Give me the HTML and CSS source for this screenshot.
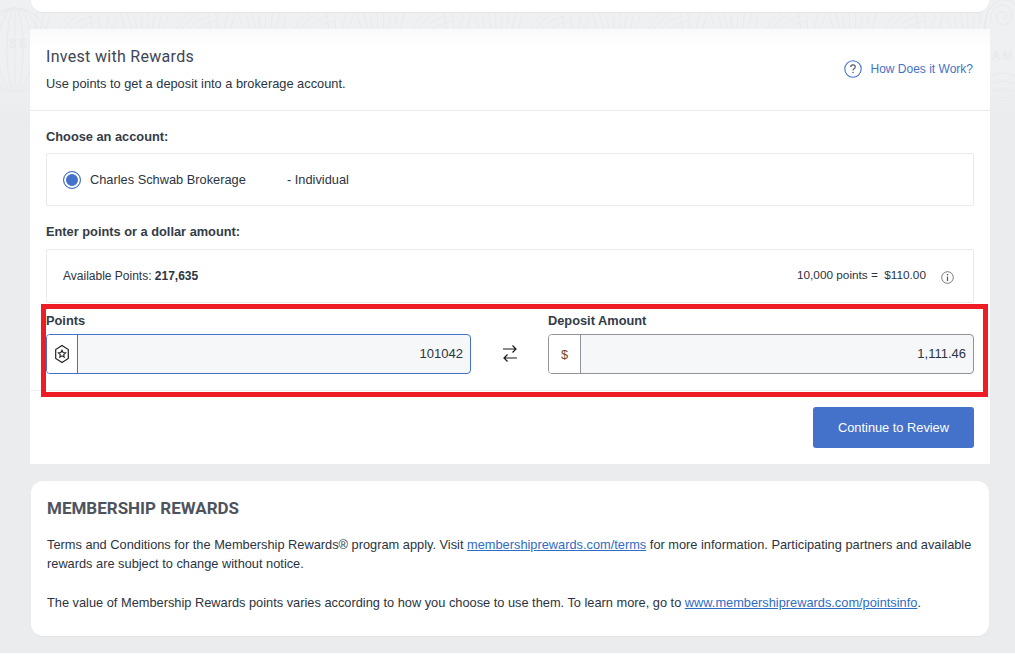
FILE: index.html
```html
<!DOCTYPE html>
<html lang="en">
<head>
<meta charset="utf-8">
<title>Invest with Rewards</title>
<link rel="stylesheet" href="styles.css">
</head>
<body>
<div class="page">
  <svg class="pattern" width="1015" height="125" viewBox="0 0 1015 125" aria-hidden="true">
    <defs>
      <pattern id="hatch" width="118" height="18" patternUnits="userSpaceOnUse" y="12">
        <path d="M2 0L8 18M9 0L14 18M16 0L19 18M23 0L24 18M30 0L29 18M37 0L34 18M44 0L40 18M51 0L46 18M58 18C62 10 68 3 76 0M64 18C68 11 74 5 84 0M70 18C74 12 80 8 92 4M78 18C82 14 88 11 98 9M90 0L93 18M98 0L100 18M106 18L110 0M112 18L118 0" fill="none" stroke="#e9eaec" stroke-width="1"/>
      </pattern>
    </defs>
    <rect width="1015" height="125" fill="#eff0f1"/>
    <rect x="30" y="12" width="960" height="18" fill="url(#hatch)"/>
    <g fill="none" stroke="#e8e9eb" stroke-width="1">
      <ellipse cx="15" cy="50" rx="36" ry="42"/>
      <ellipse cx="15" cy="50" rx="26" ry="42"/>
      <ellipse cx="15" cy="50" rx="17" ry="42"/>
      <ellipse cx="15" cy="50" rx="8" ry="42"/>
      <path d="M15 8V92"/>
      <path d="M991 22C989 12 995 4 1003 5C1011 6 1014 14 1011 20C1008 26 999 26 997 20C995 14 1000 10 1004 12C1008 14 1007 19 1003 19"/>
      <path d="M985 33C983 14 992 -1 1006 0C1012 1 1015 4 1015 6"/>
      <path d="M990 76C1000 72 1010 73 1015 76M990 84C1000 80 1010 81 1015 84M990 92C1000 88 1010 89 1015 92M990 100C1000 96 1010 97 1015 100"/>
    </g>
    <text class="pattern-text" x="9" y="48">SER</text>
    <text class="pattern-text" x="992" y="60">AM</text>
  </svg>
  <div class="top-card"></div>
  <main class="panel">
    <header class="panel-head">
      <div>
        <h1 class="title">Invest with Rewards</h1>
        <p class="subtitle">Use points to get a deposit into a brokerage account.</p>
      </div>
      <a class="how" href="#">
        <svg class="how-icon" width="18" height="18" viewBox="0 0 18 18"><circle cx="9" cy="9" r="8.2" fill="none" stroke="#4471c9" stroke-width="1.1"/><path d="M6.700 7.100C6.700 5.700 7.700 4.900 9 4.900S11.300 5.700 11.300 6.900C11.300 8.400 9 8.600 9 10.400" fill="none" stroke="#4a5568" stroke-width="1.1"/><circle cx="9" cy="12.600" r=".75" fill="#4a5568"/></svg>
        <span>How Does it Work?</span>
      </a>
    </header>
    <section class="body">
      <h2 class="label">Choose an account:</h2>
      <div class="box account">
        <span class="radio"></span>
        <span class="acct-name">Charles Schwab Brokerage</span>
        <span>- Individual</span>
      </div>
      <h2 class="label second">Enter points or a dollar amount:</h2>
      <div class="box info">
        <span>Available Points: <b>217,635</b></span>
        <div class="rate">
          <span class="rate-text">10,000 points = <span class="rate-value">$110.00</span></span>
          <svg class="info-icon" width="13" height="13" viewBox="0 0 13 13"><circle cx="6.5" cy="6.5" r="5.8" fill="none" stroke="#777" stroke-width="1"/><path d="M6.500 5.600V10" stroke="#555" stroke-width="1.200"/><circle cx="6.500" cy="3.700" r=".8" fill="#555"/></svg>
        </div>
      </div>
      <div class="fields">
        <div class="field">
          <label class="field-label">Points</label>
          <div class="input active">
            <span class="addon">
              <svg width="18" height="20" viewBox="0 0 18 20"><path d="M9 1.400L15.300 5.500V14.500L9 18.600L2.700 14.500V5.500Z" fill="none" stroke="#222" stroke-width="1.2"/><path d="M9 6.200L10.100 8.600L12.600 8.900L10.700 10.600L11.200 13.100L9 11.800L6.800 13.100L7.300 10.600L5.400 8.900L7.900 8.600Z" fill="none" stroke="#222" stroke-width="1.1"/></svg>
            </span>
            <span class="value">101042</span>
          </div>
        </div>
        <div class="swap">
          <svg width="16" height="18" viewBox="0 0 16 18"><path d="M1 5H14M10.500 1.500L14 5L10.500 8.500M15 14H2M5.500 10.500L2 14L5.500 17.500" fill="none" stroke="#1a1a1a" stroke-width="1.2"/></svg>
        </div>
        <div class="field">
          <label class="field-label">Deposit Amount</label>
          <div class="input deposit">
            <span class="addon">$</span>
            <span class="value">1,111.46</span>
          </div>
        </div>
      </div>
      <div class="actions"><button class="cta" type="button">Continue to Review</button></div>
    </section>
    <div class="highlight"></div>
  </main>
  <section class="legal">
    <h2 class="legal-title">MEMBERSHIP REWARDS</h2>
    <p class="legal-text">Terms and Conditions for the Membership Rewards® program apply. Visit <a href="#">membershiprewards.com/terms</a> for more information. Participating partners and available rewards are subject to change without notice.</p>
    <p class="legal-text">The value of Membership Rewards points varies according to how you choose to use them. To learn more, go to <a href="#">www.membershiprewards.com/pointsinfo</a>.</p>
  </section>
</div>
</body>
</html>
```
FILE: styles.css
```css
* { box-sizing: border-box; }
html, body { margin: 0; background: #fff; }
body { font-family: "Liberation Sans", Arial, sans-serif; font-size: 12.8px; color: #2b3442; overflow: hidden; }
.page { position: relative; height: 653px; background: #ebecee; padding: 0 25px 0 30px; }
.pattern { position: absolute; top: 0; left: 0; -webkit-mask-image: linear-gradient(#000 50%, transparent); mask-image: linear-gradient(#000 50%, transparent); }
.pattern-text { font: 700 12px "Liberation Sans", Arial, sans-serif; letter-spacing: 2px; fill: #e8e9eb; }
.top-card { position: relative; height: 13px; margin: 0 1px 16px; background: #fff; border-bottom: 1px solid #e3e4e6; border-radius: 0 0 12px 12px; }
.panel { position: relative; height: 435px; background: #fff; }
.panel-head { height: 82px; padding: 19px 17px 0 16px; display: flex; justify-content: space-between; border-bottom: 1px solid #e9eaec; background: linear-gradient(#fafafa, #fff 20px); }
.title { margin: 0; font: 400 16px/18px Roboto, sans-serif; letter-spacing: .3px; color: #3d4654; }
.subtitle { margin: 11px 0 0; line-height: 14px; }
.how { display: flex; align-items: center; gap: 9px; height: 18px; margin-top: 12px; font-size: 12px; color: #4471c9; text-decoration: none; }
.how-icon { display: block; }
.body { padding: 19px 16px 0; }
.label { margin: 0; font-size: 12.8px; line-height: 14px; font-weight: 700; color: #333b47; }
.label.second { margin-top: 19px; }
.box { display: flex; align-items: center; background: #fff; border: 1px solid #e9eaec; border-radius: 2px; }
.account { height: 53px; margin-top: 9px; padding-left: 16px; }
.radio { width: 18px; height: 18px; border-radius: 50%; border: 1px solid #4471c9; background: #4471c9; box-shadow: inset 0 0 0 2px #fff; margin-right: 9px; }
.acct-name { width: 197px; }
.info { height: 54px; margin-top: 10px; padding: 0 19px 0 16px; justify-content: space-between; font-size: 12px; }
.rate { display: flex; align-items: center; }
.rate-text { font-size: 11.8px; margin-top: -2px; }
.rate-value { margin-left: 3px; }
.info-icon { margin-left: 15px; margin-top: 2px; }
.fields { display: flex; height: 88px; padding: 11px 16px 0; border-bottom: 1px solid #eeeff1; margin: 0 -16px; }
.field { width: 425px; }
.field:last-child { width: 426px; }
.field-label { display: block; height: 20px; font-size: 12.8px; line-height: 14px; font-weight: 700; color: #333b47; }
.input { display: flex; height: 40px; border: 1px solid #909397; border-radius: 4px; background: #f6f7f9; overflow: hidden; }
.input.active { border-color: #4471c9; }
.addon { flex: none; width: 31px; display: flex; align-items: center; justify-content: center; background: #fff; border-right: 1px solid #909397; }
.deposit .addon { width: 32px; color: #6b4a2a; }
.active .addon { border-color: #4471c9; }
.value { flex: 1; font-size: 13px; text-align: right; line-height: 38px; padding-right: 7px; }
.swap { width: 77px; display: flex; align-items: center; justify-content: center; padding-top: 9px; height: 68px; }
.actions { display: flex; justify-content: flex-end; padding-top: 16px; }
.cta { width: 161px; height: 41px; border: 0; border-radius: 3px; background: #4471c9; color: #fff; font: 12.8px "Liberation Sans", Arial, sans-serif; }
.highlight { position: absolute; left: 11px; top: 275px; width: 947px; height: 93px; border: 5px solid #ee1c25; pointer-events: none; }
.legal { position: relative; margin: 17px 1px 0; height: 155px; padding: 17px 16px 0; background: #fff; box-shadow: 0 1px 0 #e3e4e6; border-radius: 12px; }
.legal-title { margin: 0 0 17px; font: 700 17px/20px Roboto, sans-serif; color: #4e545e; }
.legal-text { margin: 0 0 20px; line-height: 19px; }
.legal a { color: #2f6cc4; }
```
